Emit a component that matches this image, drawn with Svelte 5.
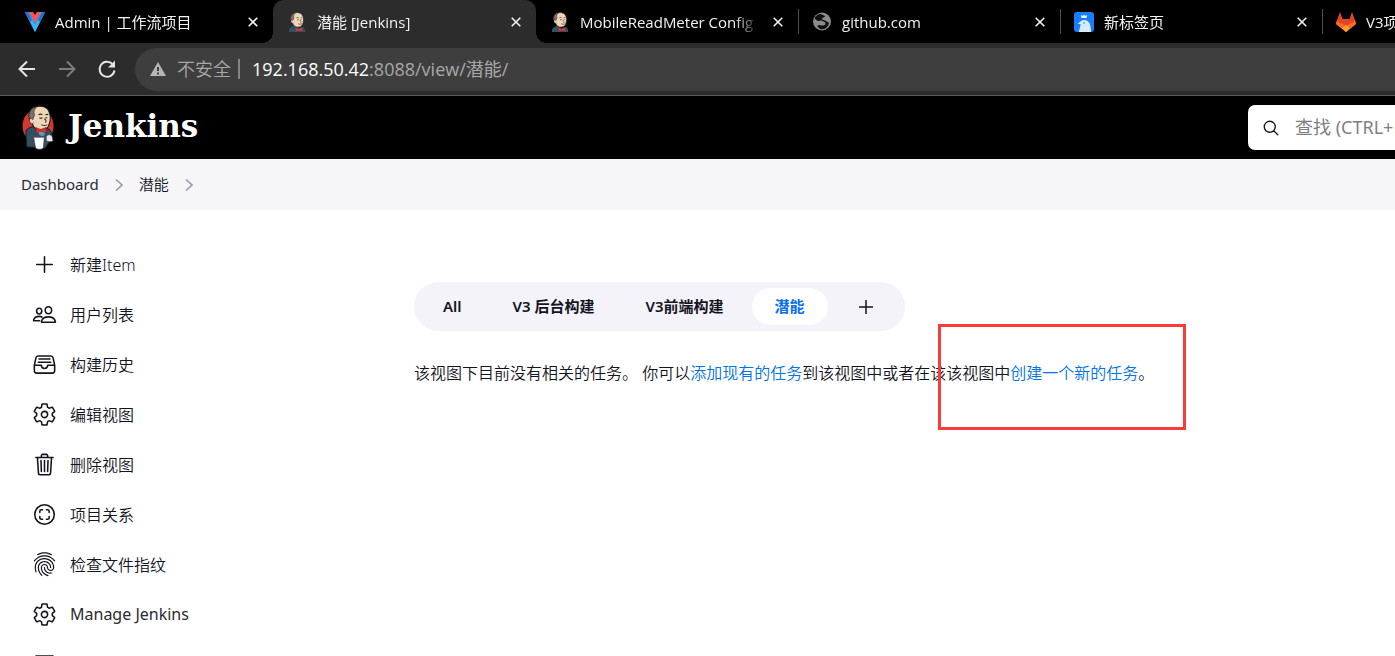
<script>
  const tabs = [
    { title: 'Admin | 工作流项目', icon: 'vee' },
    { title: '潜能 [Jenkins]', icon: 'butler', active: true },
    { title: 'MobileReadMeter Config', icon: 'butler' },
    { title: 'github.com', icon: 'globe', divider: true },
    { title: '新标签页', icon: 'bird', divider: true },
    { title: 'V3项目', icon: 'fox', divider: true }
  ];

  const gear =
    'M262.29 192.31a64 64 0 1057.4 57.4 64.13 64.13 0 00-57.4-57.4zM416.39 256a154.34 154.34 0 01-1.53 20.79l45.21 35.46a10.81 10.81 0 012.45 13.75l-42.77 74a10.81 10.81 0 01-13.14 4.59l-44.9-18.08a16.11 16.11 0 00-15.17 1.75A164.48 164.48 0 01325 400.8a15.94 15.94 0 00-8.82 12.14l-6.73 47.89a11.08 11.08 0 01-10.68 9.17h-85.54a11.11 11.11 0 01-10.69-8.87l-6.72-47.82a16.07 16.07 0 00-9-12.22 155.3 155.3 0 01-21.46-12.57 16 16 0 00-15.11-1.71l-44.89 18.07a10.81 10.81 0 01-13.14-4.58l-42.77-74a10.8 10.8 0 012.45-13.75l38.21-30a16.05 16.05 0 006-14.08c-.36-4.17-.58-8.33-.58-12.5s.21-8.27.58-12.35a16 16 0 00-6.07-13.94l-38.19-30A10.81 10.81 0 0149.48 186l42.77-74a10.81 10.81 0 0113.14-4.59l44.9 18.08a16.11 16.11 0 0015.17-1.75A164.48 164.48 0 01187 111.2a15.94 15.94 0 008.82-12.14l6.73-47.89A11.08 11.08 0 01213.23 42h85.54a11.11 11.11 0 0110.69 8.87l6.72 47.82a16.07 16.07 0 009 12.22 155.3 155.3 0 0121.46 12.57 16 16 0 0015.11 1.71l44.89-18.07a10.81 10.81 0 0113.14 4.58l42.77 74a10.8 10.8 0 01-2.45 13.75l-38.21 30a16.05 16.05 0 00-6.05 14.08c.33 4.14.55 8.3.55 12.47z';

  const tasks = [
    { label: '新建Item', d: 'M256 96v320M416 256H96' },
    {
      label: '用户列表',
      d: 'M402 168c-2.93 40.67-33.1 72-66 72s-63.12-31.32-66-72c-3-42.31 26.37-72 66-72s69 30.46 66 72zM336 304c-65.17 0-127.84 32.37-143.54 95.41-2.08 8.34 3.15 16.59 11.72 16.59h263.65c8.57 0 13.77-8.25 11.72-16.59C463.85 335.36 401.18 304 336 304zM200 185.94c-2.34 32.48-26.72 58.06-53 58.06s-50.7-25.57-53-58.06C91.61 152.15 115.34 128 147 128s55.39 24.77 53 57.94zM206 306c-18.05-8.27-37.93-11.45-59-11.45-52 0-102.1 25.85-114.65 76.2-1.65 6.66 2.53 13.25 9.37 13.25H154'
    },
    {
      label: '构建历史',
      d: 'M384 80H128c-26 0-43 14-48 40L48 272v112a48.14 48.14 0 0048 48h320a48.14 48.14 0 0048-48V272l-32-152c-5-27-23-40-48-40zM48 272h144M320 272h144M192 272a64 64 0 00128 0M144 144h224M128 208h256'
    },
    { label: '编辑视图', d: gear },
    {
      label: '删除视图',
      d: 'M112 112l20 320c.95 18.49 14.4 32 32 32h184c17.67 0 30.87-13.51 32-32l20-320M80 112h352M192 112V72h0a23.93 23.93 0 0124-24h80a23.93 23.93 0 0124 24h0v40M256 176v224M184 176l8 224M328 176l-8 224'
    },
    {
      label: '项目关系',
      d: 'M456 256c0-110-90-200-200-200S56 146 56 256s90 200 200 200 200-90 200-200zM296 352h24a32 32 0 0032-32v-24M352 216v-24a32 32 0 00-32-32h-24M216 352h-24a32 32 0 01-32-32v-24M160 216v-24a32 32 0 0132-32h24'
    },
    { label: '检查文件指纹', finger: true },
    { label: 'Manage Jenkins', d: gear, latin: true }
  ];

  const views = ['All', 'V3 后台构建', 'V3前端构建', '潜能'];
</script>

{#snippet butlerHead()}
  <path d="M6 16C3 12 4 5 9 2.500C15-.5 23 1 25 7C27 12 26 18 24 22C21 27 12 27 9 22Z" fill="#efd6b8" stroke="#231f20" stroke-width="1.200" />
  <path d="M6 16C3 12 4 5 9 2.500L12 2C9 5 9 8 10 10L8 15Z" fill="#77716b" stroke="#231f20" stroke-width=".6" />
  <path d="M7 14c-2-1-3 1-2 3s3 3 4 1" fill="#efd6b8" stroke="#231f20" stroke-width=".8" />
  <path d="M14 10q2-1.500 4 0M21 10q2-1 3 0M15 13q1.500 1 3 0M21 13l2 0M20 14q3 2 1 4M17 20q3 2 6 0" fill="none" stroke="#3a2a22" stroke-width="1.100" />
{/snippet}

{#snippet favicon(name)}
  {#if name === 'vee'}
    <svg class="fav" viewBox="0 0 20 20" aria-hidden="true">
      <path d="M0 0h6l4 7 4-7h6L10 20z" fill="#2196f3" />
      <path d="M0 0h3l7 13L17 0h3L10 20z" fill="#39b5f5" />
      <path d="M0 0h3l4 8-2 2zM20 0h-3l-4 8 2 2z" fill="#1976d2" />
      <path d="M4 0h4l2 3 2-3h4l-6 11z" fill="#ff5252" />
    </svg>
  {:else if name === 'butler'}
    <svg class="fav" viewBox="0 0 30 34" aria-hidden="true">
      {@render butlerHead()}
      <path d="M1 34c0-6 3-9 9-10l7 4 7-3c4 1 5 5 5 9z" fill="#335061" />
      <path d="M13 27l5 2 6-2v6l-6-2-5 2z" fill="#e8302d" />
    </svg>
  {:else if name === 'globe'}
    <svg class="fav" viewBox="0 0 20 20" aria-hidden="true">
      <circle cx="10" cy="9.500" r="9" fill="#8b8b8b" />
      <path d="M9 2C6 2 3 4 2.500 7c2 0 2 2 4 2 1 0 2-1 4 0 1.500 1 3 1 3 2.500 0 2-2 2-4 2L7 13l-2 1 3 3c5 1 8-2 9-6-1-1-2-1-3-2-1-1-4-1-4-2 0-2 3-1 3-3z" fill="#101010" />
    </svg>
  {:else if name === 'bird'}
    <svg class="fav" viewBox="0 0 20 20" aria-hidden="true">
      <rect width="20" height="20" rx="3" fill="#177ffd" />
      <path d="M7 3l2 1 1-1.500L11 4l2-1-.5 3h-5z" fill="#fff" />
      <path d="M3.500 12c2-1 3-4 6.500-4 5 0 7 4 7 12H5c0-3 1.500-4 1.500-8z" fill="#d9eaff" />
      <circle cx="10" cy="11" r=".8" fill="#177ffd" />
    </svg>
  {:else}
    <svg class="fav" viewBox="0 0 20 20" aria-hidden="true">
      <path d="M1 8L4 0l2.500 7h7L16 0l3 8 1 4-10 8L0 12z" fill="#e24329" />
      <path d="M1 8l9 12L0 12zM19 8l-9 12 10-8z" fill="#fc6d26" />
      <path d="M3 11c3 0 5 2 7 3 2-1 4-3 7-3l-7 9z" fill="#fc6d26" />
      <path d="M6 16l4-3 4 3-4 4z" fill="#fca326" />
    </svg>
  {/if}
{/snippet}

<div class="window">
  <div class="tab-strip">
    {#each tabs as tab}
      <div class="tab" class:active={tab.active} class:divider={tab.divider}>
        {@render favicon(tab.icon)}
        <span class="tab-title">{tab.title}</span>
        <button class="close" aria-label="关闭">
          <svg viewBox="0 0 10 10"><path d="M.7.7l8.600 8.600M9.300.7L.7 9.300" /></svg>
        </button>
      </div>
    {/each}
  </div>

  <div class="toolbar">
    <button class="nav" aria-label="后退">
      <svg viewBox="0 0 20 20"><path d="M18 10H3M10 2.500L2.500 10l7.500 7.500" /></svg>
    </button>
    <button class="nav dim" aria-label="前进">
      <svg viewBox="0 0 20 20"><path d="M2 10h15M10 2.500l7.500 7.500-7.500 7.500" /></svg>
    </button>
    <button class="nav" aria-label="刷新">
      <svg viewBox="0 0 20 20"><path d="M17.500 11.500A7.500 7.500 0 1 1 15.500 5" /><path d="M18 1.500v7h-7z" fill="currentColor" stroke="none" /></svg>
    </button>
    <div class="address">
      <svg class="warning" viewBox="0 0 16 14" aria-hidden="true">
        <path d="M8 0l8 14H0z" fill="#b4b6b9" />
        <path d="M7 5h2v4H7zM7 10.500h2v2H7z" fill="#3e3e3e" />
      </svg>
      <span class="insecure">不安全</span>
      <span class="url"><b>192.168.50.42</b>:8088/view/潜能/</span>
    </div>
  </div>

  <header>
    <a class="brand" href="#home">
      <svg viewBox="0 0 34 46" aria-hidden="true">
        <ellipse cx="16.500" cy="21.500" rx="16" ry="17.500" fill="#d33833" />
        <path d="M5 43L4 28c0-4 4-5 8-6l12 1c4 1 6 3 7 9l-3 6-4 6z" fill="#335061" stroke="#12202a" />
        <g transform="translate(3 0)">{@render butlerHead()}</g>
        <path d="M14 23l5 2 6-2v6l-6-2-4 3z" fill="#e12d2b" stroke="#761615" stroke-width=".6" />
        <path d="M17 28l3-1 4 2-2 3-4-1z" fill="#5f9ac0" />
        <path d="M12 33h11l-1 11c-2 2-6 2-8 0z" fill="#fff" stroke="#424242" stroke-width=".7" />
        <path d="M25 32c2-2 4-2 6 0l1 5c-3 1-6 1-7-1z" fill="#e9e9e9" stroke="#424242" stroke-width=".7" />
      </svg>
      <span>Jenkins</span>
    </a>
    <label class="search">
      <svg viewBox="0 0 512 512" aria-hidden="true">
        <path d="M221 64a157 157 0 1 0 157 157A157 157 0 0 0 221 64zM338 338l110 110" />
      </svg>
      <input type="text" aria-label="查找" placeholder="查找 (CTRL+K)" />
    </label>
  </header>

  <nav class="crumbs" aria-label="路径">
    <a class="latin" href="#dashboard">Dashboard</a>
    <svg viewBox="0 0 8 12" aria-hidden="true"><path d="M1 .5L7 6l-6 5.500" /></svg>
    <a href="#view">潜能</a>
    <svg viewBox="0 0 8 12" aria-hidden="true"><path d="M1 .5L7 6l-6 5.500" /></svg>
  </nav>

  <div class="body">
    <aside>
      {#each tasks as task}
        <a class="task" href="#task">
          {#if task.finger}
            <svg class="finger" viewBox="1.500 1.700 21 21" aria-hidden="true">
              <path d="M17.810 4.470c-.08 0-.16-.02-.23-.06C15.660 3.420 14 3 12.010 3c-1.980 0-3.860.47-5.570 1.410-.24.13-.54.04-.68-.2-.13-.24-.04-.55.2-.68C7.820 2.520 9.860 2 12.010 2c2.130 0 3.990.47 6.030 1.520.25.13.34.43.21.67-.09.18-.26.28-.44.28zM3.500 9.720c-.1 0-.2-.03-.29-.09-.23-.16-.28-.47-.12-.7.99-1.400 2.250-2.500 3.750-3.270C9.980 4.040 14 4.030 17.150 5.650c1.500.77 2.760 1.860 3.750 3.250.16.22.11.54-.12.7-.23.16-.54.11-.7-.12-.9-1.260-2.040-2.250-3.390-2.940-2.870-1.470-6.540-1.470-9.400.01-1.360.7-2.500 1.700-3.400 2.960-.08.14-.23.21-.39.21zm6.250 12.070c-.13 0-.26-.05-.35-.15-.87-.87-1.340-1.430-2.010-2.640-.69-1.230-1.050-2.730-1.050-4.340 0-2.970 2.540-5.390 5.660-5.390s5.660 2.420 5.660 5.390c0 .28-.22.5-.5.5s-.5-.22-.5-.5c0-2.420-2.090-4.390-4.660-4.390-2.570 0-4.660 1.970-4.660 4.390 0 1.440.32 2.770.93 3.850.64 1.150 1.080 1.640 1.850 2.420.19.2.19.51 0 .71-.11.1-.24.15-.37.15zm7.170-1.850c-1.190 0-2.240-.3-3.100-.89-1.490-1.010-2.380-2.650-2.380-4.390 0-.28.22-.5.5-.5s.5.22.5.5c0 1.410.72 2.740 1.940 3.560.71.48 1.540.71 2.540.71.24 0 .64-.03 1.040-.1.27-.05.53.13.58.41.05.27-.13.53-.41.58-.57.11-1.070.12-1.210.12zM14.910 22c-.04 0-.09-.01-.13-.02-1.590-.44-2.630-1.030-3.720-2.100-1.400-1.390-2.170-3.240-2.170-5.220 0-1.620 1.380-2.940 3.080-2.940 1.700 0 3.080 1.320 3.080 2.940 0 1.070.93 1.940 2.080 1.940s2.080-.87 2.080-1.940c0-3.770-3.250-6.830-7.250-6.830-2.840 0-5.440 1.580-6.610 4.030-.39.81-.59 1.760-.59 2.800 0 .78.07 2.010.67 3.610.1.26-.03.55-.29.64-.26.1-.55-.04-.64-.29-.49-1.310-.73-2.610-.73-3.960 0-1.200.23-2.290.68-3.240 1.330-2.790 4.280-4.600 7.510-4.600 4.550 0 8.250 3.510 8.250 7.830 0 1.620-1.380 2.940-3.080 2.940s-3.080-1.320-3.080-2.940c0-1.070-.93-1.940-2.080-1.940s-2.080.87-2.080 1.940c0 1.710.66 3.310 1.870 4.510.95.94 1.860 1.460 3.270 1.850.27.07.42.35.35.61-.05.23-.26.38-.47.38z" />
            </svg>
          {:else}
            <svg viewBox="0 0 512 512" aria-hidden="true"><path d={task.d} /></svg>
          {/if}
          <span class:latin={task.latin}>{task.label}</span>
        </a>
      {/each}
      <a class="task" href="#my-views" aria-label="我的视图">
        <svg viewBox="0 0 512 512" aria-hidden="true"><path d="M80 80h352v370H80z" /></svg>
      </a>
    </aside>

    <main>
      <div class="views">
        {#each views as view}
          <a class="view" class:current={view === '潜能'} href="#view">{view}</a>
        {/each}
        <a class="view add" href="#new-view" aria-label="新建视图">
          <svg viewBox="0 0 14 14"><path d="M7 0v14M0 7h14" /></svg>
        </a>
      </div>
      <p>该视图下目前没有相关的任务。 你可以<a href="#add">添加现有的任务</a>到该视图中或者在该该视图中<a href="#create">创建一个新的任务</a>。</p>
      <div class="marker"></div>
    </main>
  </div>
</div>

<style>
  :global(body) {
    margin: 0;
    background: #fff;
  }
  .window {
    height: 100vh;
    overflow: hidden;
    display: flex;
    flex-direction: column;
    font-family: 'Open Sans', 'Noto Sans CJK SC', sans-serif;
    color: #14141f;
  }
  a {
    color: inherit;
    text-decoration: none;
  }
  svg {
    display: block;
    flex: none;
    fill: none;
  }
  button {
    padding: 0;
    border: 0;
    background: none;
    color: inherit;
  }

  .tab-strip {
    flex: none;
    display: flex;
    height: 43px;
    padding-left: 11px;
    background: #000;
    color: #f2f2f2;
    font-size: 15px;
  }
  .tab {
    position: relative;
    box-sizing: border-box;
    flex: 0 0 262px;
    min-width: 0;
    display: flex;
    align-items: center;
    gap: 10px;
    padding: 0 15px 0 14px;
  }
  .active {
    flex-basis: 263px;
    background: #2c2c2c;
    border-radius: 11px 11px 0 0;
  }
  .active::before,
  .active::after {
    content: '';
    position: absolute;
    bottom: 0;
    width: 11px;
    height: 11px;
  }
  .active::before {
    right: 100%;
    background: radial-gradient(circle at 0 0, transparent 11px, #2c2c2c 11px);
  }
  .active::after {
    left: 100%;
    background: radial-gradient(circle at 100% 0, transparent 11px, #2c2c2c 11px);
  }
  .divider::before {
    content: '';
    position: absolute;
    left: 0;
    top: 9px;
    width: 1px;
    height: 25px;
    background: #505050;
  }
  .fav {
    width: 20px;
    height: 20px;
  }
  .tab-title {
    flex: 1;
    min-width: 0;
    overflow: hidden;
    white-space: nowrap;
    line-height: 24px;
    mask-image: linear-gradient(to right, #000 154px, transparent 180px);
  }
  .close svg {
    width: 10px;
    height: 10px;
    stroke: #f2f2f2;
    stroke-width: 1.6;
  }

  .toolbar {
    flex: none;
    display: flex;
    align-items: center;
    gap: 20px;
    height: 52px;
    padding-left: 17px;
    background: #2c2c2c;
    border-bottom: 1px solid #5a5a5a;
    color: #e4e4e4;
  }
  .nav svg {
    width: 20px;
    height: 20px;
    stroke: currentColor;
    stroke-width: 2;
  }
  .dim {
    color: #7c7c7c;
  }
  .address {
    flex: 1;
    display: flex;
    align-items: center;
    height: 43px;
    margin-left: -2px;
    padding-left: 15px;
    border-radius: 22px 0 0 22px;
    background: #3e3e3e;
    color: #a8a8a8;
    font-size: 18px;
    line-height: 20px;
    white-space: nowrap;
  }
  .warning {
    width: 16px;
    height: 14px;
  }
  .insecure {
    margin: 0 12px 0 11px;
    padding-right: 7px;
    border-right: 2px solid #858585;
    font-weight: 350;
  }
  .url b {
    font-weight: 400;
    color: #fff;
  }

  header {
    flex: none;
    display: flex;
    align-items: center;
    justify-content: space-between;
    height: 63px;
    background: #000;
  }
  .brand {
    display: flex;
    align-items: center;
    gap: 13px;
    padding-left: 22px;
    color: #fff;
    font: bold 31px/40px 'DejaVu Serif', serif;
  }
  .brand span {
    padding-bottom: 4px;
  }
  .brand svg {
    width: 33px;
    height: 45px;
  }
  .search {
    display: flex;
    align-items: center;
    gap: 15px;
    box-sizing: border-box;
    width: 147px;
    height: 45px;
    padding-left: 14px;
    border-radius: 7px 0 0 7px;
    background: #fff;
  }
  .search svg {
    width: 18px;
    height: 18px;
    stroke: #14141f;
    stroke-width: 38;
    stroke-linecap: round;
  }
  .search input {
    flex: 1;
    min-width: 0;
    padding: 0 0 2px;
    border: 0;
    outline: 0;
    background: none;
    font: 400 18px/24px 'Noto Sans', 'Noto Sans CJK SC', sans-serif;
  }
  .search input::placeholder {
    color: #808080;
  }

  .crumbs,
  .body {
    font-family: 'Noto Sans', 'Noto Sans CJK SC', sans-serif;
  }
  .crumbs {
    flex: none;
    display: flex;
    align-items: center;
    gap: 16px;
    height: 51px;
    padding-left: 21px;
    background: #f6f6f9;
    font-size: 15px;
    font-weight: 350;
  }
  .crumbs a {
    padding-bottom: 2px;
  }
  .crumbs svg {
    width: 8px;
    height: 12px;
    stroke: #9b9bae;
    stroke-width: 1.6;
  }
  .latin {
    font-weight: 400;
    color: #2a2a35;
  }

  .body {
    flex: 1;
    display: flex;
    min-height: 0;
    font-size: 16px;
  }
  aside {
    flex: 0 0 414px;
    padding-top: 29px;
  }
  .task {
    display: flex;
    align-items: center;
    gap: 13px;
    height: 50px;
    padding-left: 32px;
    font-weight: 350;
  }
  .task svg {
    width: 25px;
    height: 25px;
    stroke: #14141f;
    stroke-width: 32;
    stroke-linecap: round;
    stroke-linejoin: round;
  }
  .task .finger {
    fill: #14141f;
    stroke-width: 0;
  }

  main {
    position: relative;
    flex: 1;
    padding-top: 72px;
  }
  .views {
    display: flex;
    gap: 5px;
    width: max-content;
    padding: 6px;
    border-radius: 25px;
    background: #f3f3f9;
    font-size: 15px;
    font-weight: 600;
  }
  .view {
    display: flex;
    align-items: center;
    box-sizing: border-box;
    height: 37px;
    padding: 0 23px 2px;
    border-radius: 19px;
    white-space: nowrap;
  }
  .current {
    background: #fff;
    color: #0b6fe8;
  }
  .add {
    padding: 0 26px;
  }
  .add svg {
    width: 14px;
    height: 14px;
    stroke: #14141f;
    stroke-width: 1.5;
  }
  p {
    margin: 30px 0 0;
    line-height: 24px;
    font-weight: 350;
  }
  p a {
    color: #0073e6;
  }
  .marker {
    position: absolute;
    left: 524px;
    top: 114px;
    box-sizing: border-box;
    width: 248px;
    height: 106px;
    border: 3px solid #fb3a3a;
  }
</style>
